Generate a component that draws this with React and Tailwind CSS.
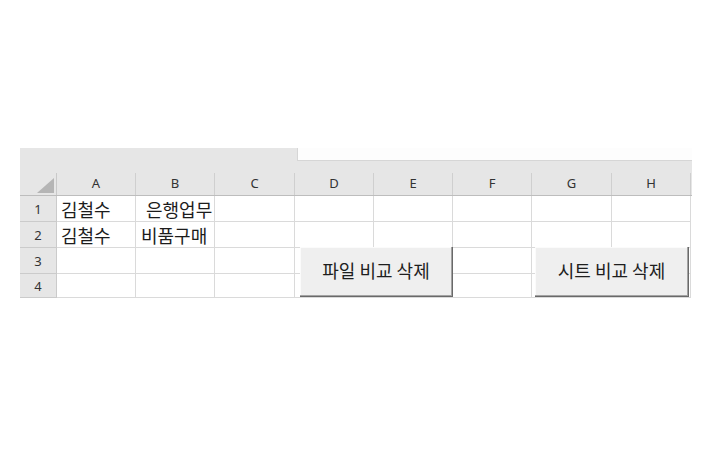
import React from 'react'

const cols = [
  { key: 'A', w: 'w-[79px]' },
  { key: 'B', w: 'w-[79px]' },
  { key: 'C', w: 'w-[80px]' },
  { key: 'D', w: 'w-[79px]' },
  { key: 'E', w: 'w-[79px]' },
  { key: 'F', w: 'w-[79px]' },
  { key: 'G', w: 'w-[80px]' },
  { key: 'H', w: 'w-[79px]' },
]

const rows = [
  { n: 1, h: 'h-[26px]', cells: { A: { text: '김철수', pad: 'pl-[4px]' }, B: { text: '은행업무', pad: 'pl-[10px]' } } },
  { n: 2, h: 'h-[26px]', cells: { A: { text: '김철수', pad: 'pl-[4px]' }, B: { text: '비품구매', pad: 'pl-[5px]' } } },
  { n: 3, h: 'h-[26px]', cells: {} },
  { n: 4, h: 'h-[24px]', cells: {} },
]

const uiFont = "font-['Noto_Sans','Liberation_Sans',sans-serif]"
const krFont = "font-['Noto_Sans_CJK_KR','Noto_Sans',sans-serif]"

function SheetButton({ label, className }) {
  return (
    <button
      className={`absolute flex items-center justify-center bg-[#efefef] border-r border-b border-[#696969] shadow-[inset_-1px_-1px_0_#a3a3a3,inset_1px_1px_0_#fbfbfb] text-[18px] text-[#1e1e1e] pb-[2px] ${krFont} ${className}`}
    >
      {label}
    </button>
  )
}

export default function App() {
  return (
    <div className="w-[701px] h-[468px] bg-white overflow-hidden">
      <div className="ml-[20px] mt-[148px] w-[672px]">
        {/* formula strip */}
        <div className="flex h-[13px]">
          <div className="w-[277px] bg-[#e6e6e6]" />
          <div className="flex-1 bg-[#fdfdfd] border-l border-b border-[#d6d6d6]" />
        </div>

        {/* column headers */}
        <div className={`flex h-[35px] bg-[#e6e6e6] border-b border-[#bdbdbd] items-end ${uiFont}`}>
          <div className="w-[37px] h-[22px] border-r border-[#c9c9c9] relative">
            <svg className="absolute right-[2px] bottom-[2px]" width="17" height="15" viewBox="0 0 17 15">
              <polygon points="17,0 17,15 0,15" fill="#b5b5b5" />
            </svg>
          </div>
          {cols.map(c => (
            <div
              key={c.key}
              className={`${c.w} h-[22px] border-r border-[#cfcfcf] flex items-center justify-center text-[13px] text-[#333333] pb-[1px]`}
            >
              {c.key}
            </div>
          ))}
        </div>

        {/* rows */}
        <div className="relative w-[671px]">
          {rows.map(r => (
            <div key={r.n} className={`flex ${r.h}`}>
              <div className={`w-[37px] bg-[#e6e6e6] border-r border-b border-[#cbcbcb] flex items-center justify-center text-[13px] text-[#333333] pt-[2px] ${uiFont}`}>
                {r.n}
              </div>
              {cols.map(c => {
                const cell = r.cells[c.key]
                return (
                  <div
                    key={c.key}
                    className={`${c.w} border-r border-b border-[#dadada] flex items-end pb-[1px] whitespace-nowrap text-[18px] leading-[22px] text-[#1c1c1c] ${krFont} ${cell ? cell.pad : ''}`}
                  >
                    {cell ? cell.text : ''}
                  </div>
                )
              })}
            </div>
          ))}

          <SheetButton label="파일 비교 삭제" className="left-[280px] top-[51px] w-[153px] h-[50px]" />
          <SheetButton label="시트 비교 삭제" className="left-[515px] top-[51px] w-[154px] h-[50px]" />
        </div>
      </div>
    </div>
  )
}
